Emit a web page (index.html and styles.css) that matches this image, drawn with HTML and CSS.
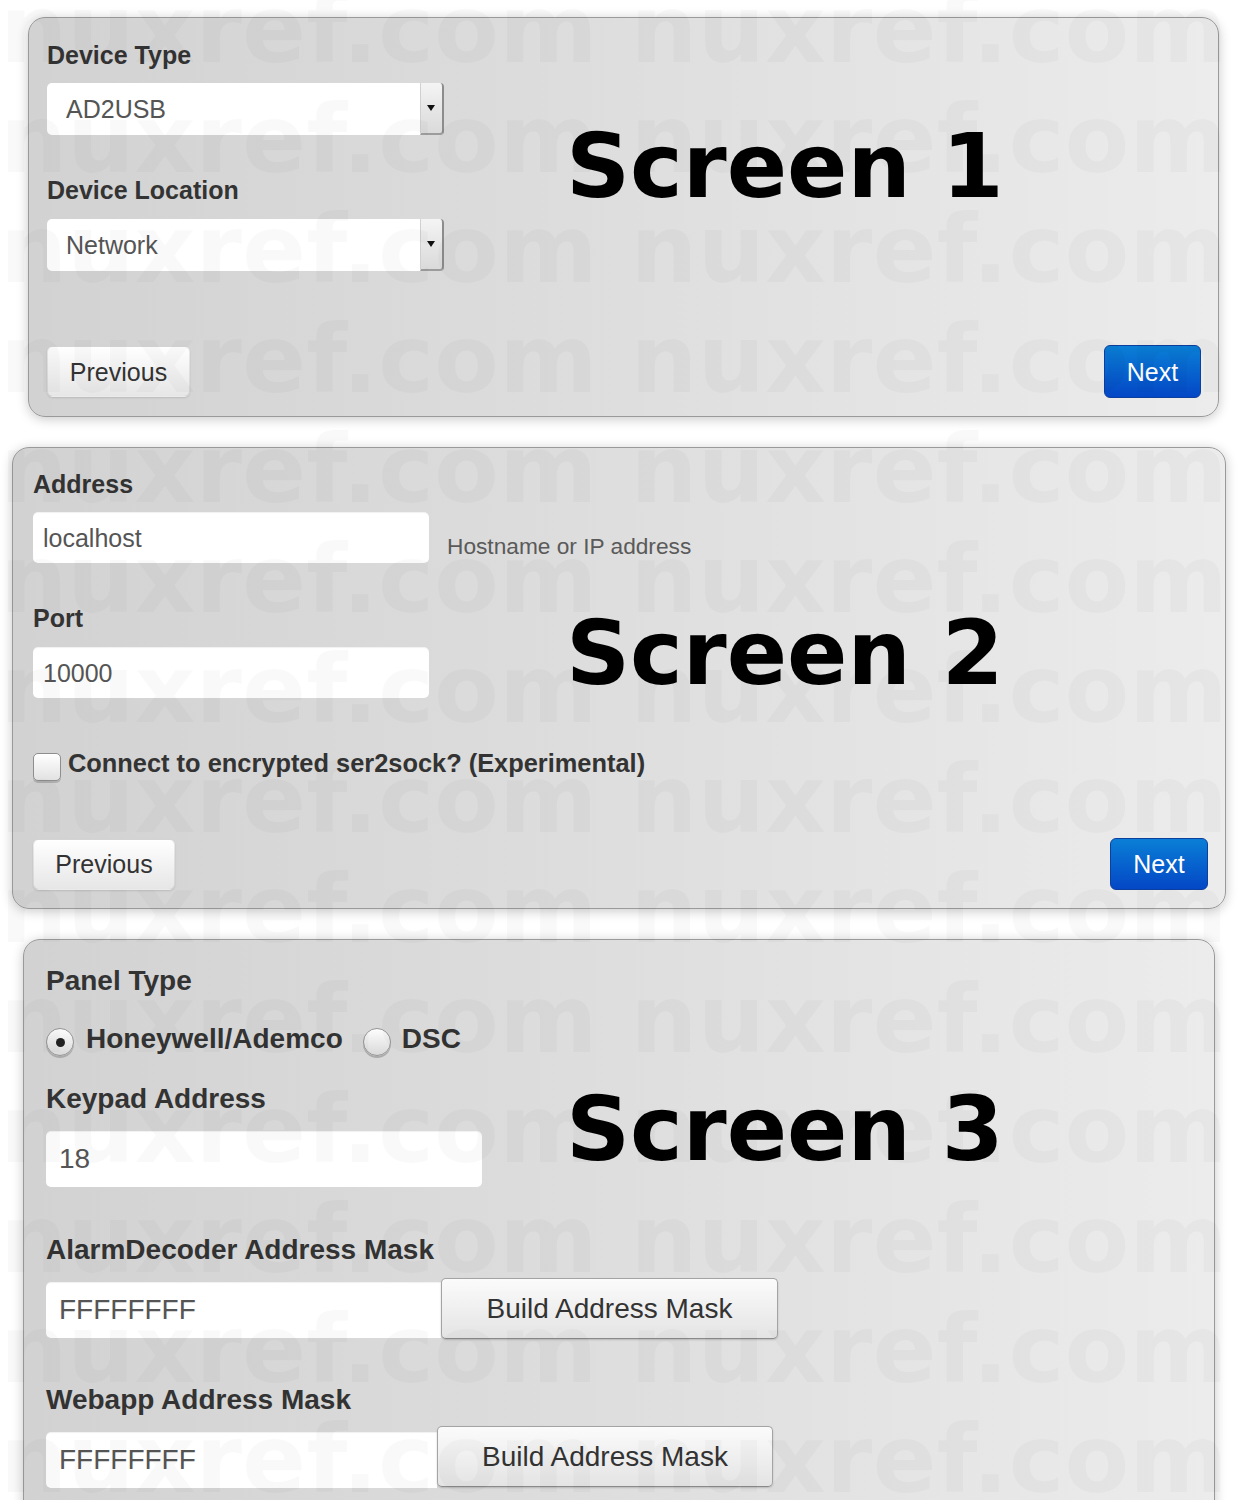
FILE: index.html
```html
<!DOCTYPE html>
<html lang="en">
<head>
<meta charset="utf-8">
<title>AlarmDecoder setup screens</title>
<link rel="stylesheet" href="styles.css">
</head>
<body>
<div class="page">

  <section class="panel panel-1">
    <div class="panel-body">
      <div class="fields">
        <div class="field-label">Device Type</div>
        <div class="select"><span class="select-text">AD2USB</span><span class="select-caret"></span></div>
        <div class="field-label field-label-spaced">Device Location</div>
        <div class="select"><span class="select-text">Network</span><span class="select-caret"></span></div>
      </div>
      <div class="screen-title title-1">Screen 1</div>
    </div>
    <div class="actions actions-1">
      <button class="btn btn-default">Previous</button>
      <button class="btn btn-primary">Next</button>
    </div>
  </section>

  <section class="panel panel-2">
    <div class="panel-body">
      <div class="fields">
        <div class="field-label">Address</div>
        <div class="input-row">
          <div class="input input-md">localhost</div>
          <span class="help-inline">Hostname or IP address</span>
        </div>
        <div class="field-label field-label-spaced">Port</div>
        <div class="input input-md">10000</div>
        <div class="check-row">
          <span class="checkbox"></span>
          <span class="check-label">Connect to encrypted ser2sock? (Experimental)</span>
        </div>
      </div>
      <div class="screen-title title-2">Screen 2</div>
    </div>
    <div class="actions actions-2">
      <button class="btn btn-default btn-prev-2">Previous</button>
      <button class="btn btn-primary btn-next-2">Next</button>
    </div>
  </section>

  <section class="panel panel-3">
    <div class="panel-body">
      <div class="fields fields-lg">
        <div class="field-label">Panel Type</div>
        <div class="radio-row">
          <span class="radio radio-checked"></span>
          <span class="radio-label">Honeywell/Ademco</span>
          <span class="radio"></span>
          <span class="radio-label">DSC</span>
        </div>
        <div class="field-label keypad-label">Keypad Address</div>
        <div class="input input-lg input-keypad">18</div>
        <div class="field-label mask-label">AlarmDecoder Address Mask</div>
        <div class="append-row append-row-1">
          <div class="input input-lg input-append">FFFFFFFF</div>
          <button class="btn btn-build">Build Address Mask</button>
        </div>
        <div class="field-label mask-label-2">Webapp Address Mask</div>
        <div class="append-row append-row-2">
          <div class="input input-lg input-append input-append-2">FFFFFFFF</div>
          <button class="btn btn-build btn-build-2">Build Address Mask</button>
        </div>
      </div>
      <div class="screen-title title-3">Screen 3</div>
    </div>
  </section>

</div>

<div class="watermark" aria-hidden="true">
  <div class="wm-row">nuxref.com nuxref.com</div>
  <div class="wm-row">nuxref.com nuxref.com</div>
  <div class="wm-row">nuxref.com nuxref.com</div>
  <div class="wm-row">nuxref.com nuxref.com</div>
  <div class="wm-row">nuxref.com nuxref.com</div>
  <div class="wm-row">nuxref.com nuxref.com</div>
  <div class="wm-row">nuxref.com nuxref.com</div>
  <div class="wm-row">nuxref.com nuxref.com</div>
  <div class="wm-row">nuxref.com nuxref.com</div>
  <div class="wm-row">nuxref.com nuxref.com</div>
  <div class="wm-row">nuxref.com nuxref.com</div>
  <div class="wm-row">nuxref.com nuxref.com</div>
  <div class="wm-row">nuxref.com nuxref.com</div>
  <div class="wm-row">nuxref.com nuxref.com</div>
  <div class="wm-row">nuxref.com nuxref.com</div>
</div>
</body>
</html>
```

FILE: styles.css
```css
html, body {
  margin: 0;
  padding: 0;
  background: #ffffff;
}

body {
  position: relative;
  font-family: "Liberation Sans", Arial, sans-serif;
  color: #333333;
  overflow: hidden;
  height: 1500px;
}

.page {
  display: flex;
  flex-direction: column;
  align-items: flex-start;
  gap: 30px;
  padding-top: 17px;
}

/* ---------- panels ---------- */
.panel {
  box-sizing: border-box;
  border: 1px solid #9a9a9a;
  border-radius: 17px;
  background: linear-gradient(to right, #d2d2d2 0%, #dedede 50%, #ececec 100%);
  box-shadow: 0 2px 12px rgba(0, 0, 0, 0.22);
}

.panel-1 {
  margin-left: 28px;
  width: 1191px;
  padding: 22px 17px 18px 18px;
}

.panel-2 {
  margin-left: 12px;
  width: 1214px;
  padding: 21px 17px 18px 20px;
}

.panel-3 {
  margin-left: 23px;
  width: 1192px;
  padding: 24px 17px 40px 22px;
}

.panel-body {
  display: grid;
  grid-template-columns: 1fr;
}

.fields,
.screen-title {
  grid-area: 1 / 1;
}

.fields {
  display: flex;
  flex-direction: column;
  align-items: flex-start;
}

/* ---------- big annotation ---------- */
.screen-title {
  align-self: start;
  justify-self: start;
  font-family: "DejaVu Sans", sans-serif;
  font-weight: bold;
  font-size: 89px;
  line-height: 90px;
  color: #000000;
  white-space: nowrap;
}

.title-1 { margin-left: 519px; margin-top: 81px; }
.title-2 { margin-left: 533px; margin-top: 139px; }
.title-3 { margin-left: 520px; margin-top: 120px; }

/* ---------- labels ---------- */
.field-label {
  font-weight: bold;
  font-size: 25px;
  line-height: 30px;
  color: #333333;
  margin-bottom: 13px;
}

.field-label-spaced {
  margin-top: 40px;
  margin-bottom: 14px;
}

.fields-lg .field-label {
  font-size: 28px;
  line-height: 34px;
  margin-bottom: 0;
}

.fields-lg .keypad-label { margin-top: 26px; margin-bottom: 15px; }
.fields-lg .mask-label { margin-top: 46px; }
.fields-lg .mask-label-2 { margin-top: 44px; }

/* ---------- select ---------- */
.select {
  display: flex;
  align-items: stretch;
  width: 397px;
  height: 52px;
  background: #ffffff;
  border-radius: 5px;
  box-sizing: border-box;
}

.select-text {
  flex: 1;
  display: flex;
  align-items: center;
  padding-left: 19px;
  font-size: 25px;
  line-height: 30px;
  color: #555555;
}

.select-caret {
  position: relative;
  width: 24px;
  box-sizing: border-box;
  background: linear-gradient(#f4f4f4, #dadada);
  border-left: 1px solid #d0d0d0;
  border-right: 2px solid #8c8c8c;
  border-bottom: 2px solid #9c9c9c;
  border-radius: 0 4px 4px 0;
}

.select-caret::after {
  content: "";
  position: absolute;
  left: 6px;
  top: 22px;
  border-left: 4.5px solid transparent;
  border-right: 4.5px solid transparent;
  border-top: 6px solid #111111;
}

/* ---------- inputs ---------- */
.input {
  box-sizing: border-box;
  display: flex;
  align-items: center;
  background: #ffffff;
  border-radius: 5px;
  color: #555555;
  box-shadow: inset 0 1px 1px rgba(0, 0, 0, 0.06);
}

.input-md {
  width: 396px;
  height: 51px;
  padding-left: 10px;
  font-size: 25px;
  line-height: 30px;
}

.input-lg {
  height: 56px;
  padding-left: 13px;
  font-size: 28px;
  line-height: 34px;
}

.input-keypad { width: 436px; }

.input-row {
  display: flex;
  align-items: flex-end;
}

.help-inline {
  margin-left: 18px;
  margin-bottom: 3px;
  font-size: 22.7px;
  line-height: 27px;
  color: #5a5a5a;
}

/* ---------- checkbox ---------- */
.check-row {
  display: flex;
  align-items: flex-start;
  margin-top: 50px;
}

.checkbox {
  box-sizing: border-box;
  width: 28px;
  height: 28px;
  margin-top: 5px;
  border: 1px solid #8e8e8e;
  border-radius: 5px;
  background: linear-gradient(#ffffff, #e2e2e2);
  box-shadow: 0 2px 0 #b0b0b0;
}

.check-label {
  margin-left: 7px;
  font-weight: bold;
  font-size: 25.4px;
  line-height: 30px;
  color: #333333;
}

/* ---------- radios ---------- */
.radio-row {
  display: flex;
  align-items: flex-start;
  margin-top: 24px;
}

.radio {
  position: relative;
  box-sizing: border-box;
  width: 28px;
  height: 28px;
  margin-top: 6px;
  border: 1px solid #969696;
  border-radius: 50%;
  background: linear-gradient(#fdfdfd, #d9d9d9);
  box-shadow: 0 2px 0 #ababab;
}

.radio-checked::after {
  content: "";
  position: absolute;
  left: 9px;
  top: 9px;
  width: 9px;
  height: 9px;
  border-radius: 50%;
  background: #222222;
}

.radio-label {
  margin-left: 12px;
  margin-right: 20px;
  font-weight: bold;
  font-size: 28px;
  line-height: 34px;
  color: #333333;
}

.radio-label:last-child { margin-right: 0; margin-left: 11px; }

/* ---------- append rows ---------- */
.append-row {
  display: flex;
  align-items: flex-start;
}

.append-row-1 { margin-top: 11px; }
.append-row-2 { margin-top: 9px; }

.input-append {
  width: 395px;
  margin-top: 4px;
  border-radius: 5px 0 0 5px;
}

.input-append-2 {
  width: 391px;
  margin-top: 6px;
}

/* ---------- buttons ---------- */
.btn {
  box-sizing: border-box;
  margin: 0;
  font-family: "Liberation Sans", Arial, sans-serif;
  font-size: 25px;
  line-height: 30px;
  border-radius: 6px;
  cursor: pointer;
}

.btn-default {
  width: 143px;
  height: 51px;
  padding: 0;
  color: #333333;
  background: linear-gradient(#ffffff, #e6e6e6);
  border: 1px solid rgba(0, 0, 0, 0.08);
  box-shadow: 0 1px 2px rgba(0, 0, 0, 0.12);
}

.btn-primary {
  width: 97px;
  height: 53px;
  padding: 0;
  color: #ffffff;
  background: linear-gradient(#0a7fd6, #0447c6);
  border: 1px solid #0d3f9e;
}

.btn-prev-2 { width: 142px; }
.btn-next-2 { width: 98px; height: 52px; }

.actions {
  display: flex;
  justify-content: space-between;
  align-items: center;
}

.actions-1 { margin-top: 74px; }
.actions-2 { margin-top: 57px; }

.btn-build {
  width: 337px;
  height: 61px;
  padding: 0;
  font-size: 28px;
  line-height: 34px;
  color: #333333;
  background: linear-gradient(#fbfbfb, #e4e4e4);
  border: 1px solid #a4a4a4;
  border-bottom-color: #8a8a8a;
  border-radius: 5px;
  box-shadow: 0 1px 2px rgba(0, 0, 0, 0.18);
}

.btn-build-2 { width: 336px; }

/* ---------- watermark overlay ---------- */
.watermark {
  position: absolute;
  top: -26px;
  left: 0;
  right: 0;
  height: 1526px;
  overflow: hidden;
  pointer-events: none;
  z-index: 10;
}

.wm-row {
  font-family: "DejaVu Sans", sans-serif;
  font-weight: bold;
  font-size: 94.5px;
  line-height: 110px;
  color: rgba(0, 0, 0, 0.022);
  white-space: nowrap;
}
```
